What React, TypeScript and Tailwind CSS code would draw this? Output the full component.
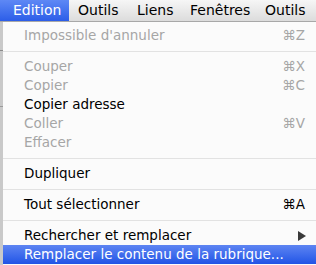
import React from "react";

const font = { fontFamily: '"DejaVu Sans", "Liberation Sans", sans-serif' };

function Item({ label, shortcut, disabled, arrow, active }: { label: string; shortcut?: string; disabled?: boolean; arrow?: boolean; active?: boolean }) {
  return (
    <div
      className={`h-[19px] flex items-center pl-[21px] pr-[11px] text-[13.5px] leading-none ${
        active ? "bg-gradient-to-b from-[#5d84f2] to-[#2153e6] text-white" : disabled ? "text-[#a6a6a6]" : "text-black"
      }`}
    >
      <span className="flex-1 whitespace-nowrap">{label}</span>
      {shortcut && <span className={disabled ? "text-[#a6a6a6]" : "text-black"}>{shortcut}</span>}
      {arrow && (
        <svg width="8" height="10" viewBox="0 0 8 10" className="-mr-[1px]">
          <path d="M0 0 L8 5 L0 10 Z" fill="#3a3a3a" />
        </svg>
      )}
    </div>
  );
}

function Sep() {
  return (
    <div className="h-[12px] flex items-center">
      <div className="h-px w-full bg-[#e2e2e2]" />
    </div>
  );
}

export default function App() {
  return (
    <div className="w-[316px] h-[265px] overflow-hidden bg-white" style={font}>
      <div className="h-[22px] flex items-stretch bg-gradient-to-b from-[#f6f6f6] to-[#dcdcdc] border-b border-[#a8a8a8] text-[14px] text-black whitespace-nowrap">
        <div className="w-[69px] shrink-0 flex items-center pl-[13px] bg-gradient-to-b from-[#5e88f5] to-[#2c5de8] text-white">Edition</div>
        <div className="w-[59px] shrink-0 flex items-center pl-[9px]">Outils</div>
        <div className="w-[53px] shrink-0 flex items-center pl-[9px]">Liens</div>
        <div className="w-[75px] shrink-0 flex items-center pl-[9px]">Fenêtres</div>
        <div className="shrink-0 flex items-center pl-[9px]">Outils</div>
      </div>
      <div className="flex h-[243px]">
        <div className="w-[3px] bg-[#c9c9c9] flex flex-col">
          <div className="h-[28px]" />
          <div className="h-px bg-[#8a8a8a]" />
          <div className="h-[55px]" />
          <div className="h-px bg-[#9a9a9a]" />
        </div>
        <div className="flex-1 bg-[#fbfbfb] pt-[4px]">
          <Item label="Impossible d'annuler" shortcut="⌘Z" disabled />
          <Sep />
          <Item label="Couper" shortcut="⌘X" disabled />
          <Item label="Copier" shortcut="⌘C" disabled />
          <Item label="Copier adresse" />
          <Item label="Coller" shortcut="⌘V" disabled />
          <Item label="Effacer" disabled />
          <Sep />
          <Item label="Dupliquer" />
          <Sep />
          <Item label="Tout sélectionner" shortcut="⌘A" />
          <Sep />
          <Item label="Rechercher et remplacer" arrow />
          <Item label="Remplacer le contenu de la rubrique..." active />
        </div>
      </div>
    </div>
  );
}
